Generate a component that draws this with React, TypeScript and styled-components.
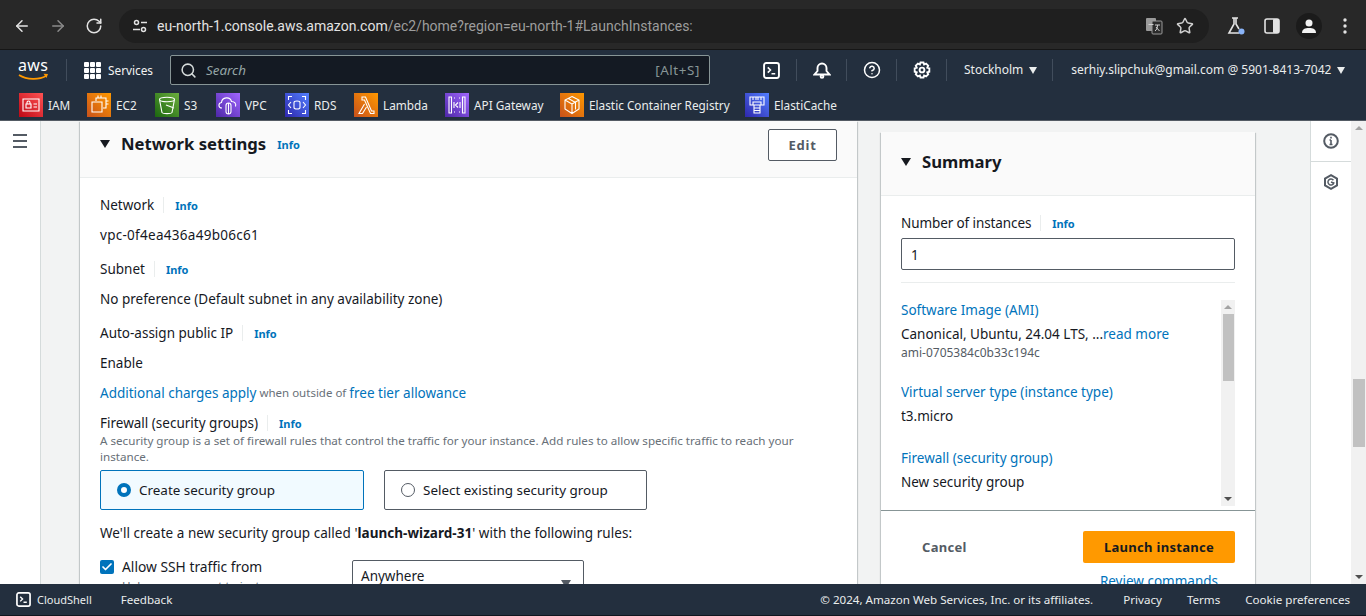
import React from "react";
import styled, { createGlobalStyle } from "styled-components";
import { ArrowLeft, ArrowRight, RotateCw, Star, CircleHelp, Search, Check } from "lucide-react";

const GlobalStyle = createGlobalStyle`
	html, body {
		margin: 0;
		padding: 0;
		height: 100%;
		overflow: hidden;
		background: #f2f3f3;
	}
	* {
		box-sizing: border-box;
	}
	body {
		font-family: "Noto Sans", "Open Sans", sans-serif;
		font-size: 14px;
		line-height: 20px;
		color: #16191f;
	}
`;

const Page = styled.div`
	width: 1366px;
	height: 616px;
	display: flex;
	flex-direction: column;
	overflow: hidden;
`;

/* browser chrome */
const BrowserBar = styled.div`
	height: 50px;
	flex: none;
	background: #282828;
	border-bottom: 1px solid #161616;
	display: flex;
	align-items: center;
	padding: 2px 0 0 13px;
	color: #e3e3e3;
`;
const NavBtn = styled.span<{ $dim?: boolean }>`
	width: 18px;
	height: 18px;
	margin-right: 18px;
	display: flex;
	color: ${(p) => (p.$dim ? "#8a8a8a" : "#e3e3e3")};
`;
const AddressPill = styled.div`
	margin-left: -2px;
	width: 1090px;
	height: 34px;
	border-radius: 17px;
	background: #1f1f1f;
	display: flex;
	align-items: center;
	padding-left: 9px;
`;
const TuneBadge = styled.span`
	width: 24px;
	height: 24px;
	display: flex;
	align-items: center;
	justify-content: center;
	margin-right: 4px;
`;
const Url = styled.div`
	font-family: Roboto, "Noto Sans", sans-serif;
	font-size: 14px;
	color: #9d9d9d;
	flex: 1;
	white-space: nowrap;
	padding-left: 1px;
`;
const UrlHost = styled.span`
	color: #e3e3e3;
`;
const PillIcons = styled.div`
	display: flex;
	align-items: center;
	gap: 13px;
	padding-right: 15px;
`;
const ChromeIcons = styled.div`
	display: flex;
	align-items: center;
	margin-left: 17px;
`;
const Avatar = styled.span`
	width: 26px;
	height: 26px;
	border-radius: 50%;
	background: #1b1b1b;
	display: flex;
	align-items: center;
	justify-content: center;
	margin: 0 21px 0 16px;
`;

/* console header */
const ConsoleHeader = styled.header`
	flex: none;
	height: 71px;
	background: #232f3e;
	color: #fff;
	border-bottom: 1px solid #545b64;
`;
const TopRow = styled.div`
	height: 38px;
	display: flex;
	align-items: center;
	padding: 2px 0 0 18px;
	font-size: 12px;
`;
const VLine = styled.span<{ $h?: number }>`
	width: 1px;
	height: ${(p) => p.$h ?? 22}px;
	background: #414d5c;
	flex: none;
`;
const Services = styled.div`
	display: flex;
	align-items: center;
	gap: 7px;
	margin-left: 17px;
	width: 86px;
	font-size: 11.8px;
	color: #f2f3f3;
	flex: none;
`;
const GridDots = styled.span`
	display: grid;
	grid-template-columns: repeat(3, 5px);
	grid-auto-rows: 5px;
	gap: 1px;
	& > i {
		background: #fff;
		border-radius: 1px;
	}
`;
const SearchBox = styled.div`
	width: 540px;
	height: 30px;
	flex: none;
	background: #141a23;
	border: 1px solid #879596;
	border-radius: 2px;
	display: flex;
	align-items: center;
	padding: 0 9px;
	color: #d5dbdb;
`;
const SearchHint = styled.span`
	font-style: italic;
	font-size: 13.4px;
	color: #95a5a6;
	margin-left: 9px;
	flex: 1;
`;
const ShortKey = styled.span`
	font-size: 13.4px;
	letter-spacing: 0.6px;
	color: #879596;
`;
const HeadIcon = styled.span`
	width: 49px;
	display: flex;
	justify-content: center;
	flex: none;
`;
const Region = styled.span`
	display: flex;
	align-items: center;
	gap: 6px;
	font-size: 12px;
	color: #eaeded;
`;
const Caret = styled.span<{ $size?: number; $color?: string }>`
	width: 0;
	height: 0;
	flex: none;
	border-left: ${(p) => p.$size ?? 5}px solid transparent;
	border-right: ${(p) => p.$size ?? 5}px solid transparent;
	border-top: ${(p) => (p.$size ?? 5) + 3}px solid ${(p) => p.$color ?? "#eaeded"};
`;
const Favorites = styled.div`
	height: 32px;
	display: flex;
	align-items: center;
	gap: 17px;
	padding: 2px 0 0 19px;
	font-size: 11.8px;
	color: #eaeded;
`;
const FavItem = styled.span`
	display: flex;
	align-items: center;
	gap: 5px;
	white-space: nowrap;
`;
const FavLabel = styled.span<{ $w: number }>`
	width: ${(p) => p.$w}px;
`;
const Tile = styled.span<{ $from: string; $to: string }>`
	width: 24px;
	height: 24px;
	display: flex;
	background: linear-gradient(45deg, ${(p) => p.$from}, ${(p) => p.$to});
`;

/* page body */
const Main = styled.main`
	flex: 1;
	min-height: 0;
	display: flex;
	overflow: hidden;
`;
const NavRail = styled.div`
	width: 41px;
	flex: none;
	background: #fff;
	border-right: 1px solid #d5dbdb;
	padding: 13px 0 0 13px;
	display: flex;
	flex-direction: column;
	gap: 4px;
	& > i {
		width: 14px;
		height: 2px;
		background: #545b64;
	}
`;
const Canvas = styled.div`
	flex: 1;
	display: grid;
	grid-template-columns: 777px 374px;
	gap: 24px;
	padding: 0 55px 0 39px;
	overflow: hidden;
`;
const Card = styled.section`
	background: #fff;
	box-shadow: 0 1px 1px 0 rgba(0, 28, 36, 0.3), 1px 1px 1px 0 rgba(0, 28, 36, 0.15),
		-1px 1px 1px 0 rgba(0, 28, 36, 0.15);
`;
const CardHead = styled.div`
	height: 57px;
	background: #fafafa;
	border-bottom: 1px solid #eaeded;
	padding: 8px 20px 0;
	display: flex;
	align-items: flex-start;
`;
const TitleWrap = styled.div`
	display: flex;
	align-items: center;
	flex: 1;
	height: 30px;
`;
const Title = styled.h2`
	font-size: 16.7px;
	line-height: 30px;
	font-weight: 700;
	margin: 0 11px 0 11px;
`;
const InfoLink = styled.a`
	font-size: 11px;
	font-weight: 700;
	color: #0073bb;
	line-height: 16px;
	padding-top: 2px;
`;
const EditBtn = styled.button`
	width: 69px;
	height: 32px;
	background: #fff;
	border: 1px solid #545b64;
	border-radius: 2px;
	color: #545b64;
	font: 700 13px/20px "Noto Sans", sans-serif;
	letter-spacing: 0.8px;
	padding: 0;
`;
const Form = styled.div`
	padding: 17px 20px 0;
	display: flex;
	flex-direction: column;
`;
const Row = styled.div<{ $top?: number; $track?: number }>`
	display: flex;
	align-items: center;
	height: 20px;
	margin-top: ${(p) => p.$top ?? 0}px;
	font-size: 13.5px;
	letter-spacing: ${(p) => p.$track ?? 0}px;
	white-space: nowrap;
`;
const Divider = styled.span`
	width: 1px;
	height: 16px;
	background: #eaeded;
	margin: 0 11px 0 9px;
`;
const Link = styled.a`
	color: #0073bb;
`;
const Muted = styled.span`
	font-size: 11.5px;
	color: #687078;
	margin: 0 3px;
`;
const Help = styled.p`
	margin: 0;
	font-size: 11.65px;
	line-height: 16px;
	color: #687078;
	width: 720px;
`;
const TileRow = styled.div`
	display: flex;
	gap: 20px;
	margin-top: 5px;
`;
const RadioTile = styled.div<{ $on?: boolean }>`
	height: 40px;
	width: ${(p) => (p.$on ? 264 : 263)}px;
	display: flex;
	align-items: center;
	gap: 8px;
	padding-left: 16px;
	font-size: 13.45px;
	border: 1px solid ${(p) => (p.$on ? "#0073bb" : "#545b64")};
	background: ${(p) => (p.$on ? "#f1faff" : "#fff")};
	border-radius: 2px;
`;
const RadioDot = styled.span<{ $on?: boolean }>`
	width: 14px;
	height: 14px;
	border-radius: 50%;
	flex: none;
	border: ${(p) => (p.$on ? "4px solid #0073bb" : "1px solid #545b64")};
	background: #fff;
`;
const SshRow = styled.div`
	display: grid;
	grid-template-columns: 252px 232px;
	margin-top: 14px;
`;
const CheckField = styled.div`
	display: grid;
	grid-template-columns: 14px auto;
	align-content: start;
	column-gap: 8px;
	font-size: 13.8px;
`;
const CheckBox = styled.span`
	width: 14px;
	height: 14px;
	margin-top: 3px;
	background: #0073bb;
	border-radius: 2px;
	color: #fff;
	display: flex;
	align-items: center;
	justify-content: center;
`;
const CheckHelp = styled.span`
	grid-column: 2;
	margin-top: 1px;
	font-size: 11.65px;
	line-height: 16px;
	color: #687078;
`;
const SelectBox = styled.div`
	height: 48px;
	margin-top: 3px;
	border: 1px solid #545b64;
	border-radius: 2px;
	display: flex;
	align-items: flex-start;
	justify-content: space-between;
	padding: 5px 12px 0 8px;
	font-size: 13.5px;
`;
const SelectCaret = styled(Caret)`
	margin-top: 14px;
`;

/* summary */
const SummaryCol = styled.div`
	padding-top: 11px;
`;
const SummaryHead = styled.div`
	height: 64px;
	background: #fafafa;
	border-bottom: 1px solid #eaeded;
	padding: 0 20px 3px;
	display: flex;
	align-items: center;
`;
const SummaryBody = styled.div`
	padding: 17px 20px 4px;
`;
const CountInput = styled.div`
	height: 32px;
	margin-top: 5px;
	border: 1px solid #545b64;
	border-radius: 2px;
	display: flex;
	align-items: center;
	padding: 1px 0 0 9px;
	font-size: 13.5px;
`;
const HLine = styled.div`
	height: 1px;
	background: #eaeded;
	margin: 12px 0 17px;
`;
const ScrollArea = styled.div`
	height: 206px;
	display: flex;
	justify-content: space-between;
	overflow: hidden;
`;
const Specs = styled.div`
	display: flex;
	flex-direction: column;
`;
const MiniBar = styled.div`
	width: 14px;
	flex: none;
	background: #f1f1f1;
	display: flex;
	flex-direction: column;
	align-items: center;
`;
const Arrow = styled.span<{ $up?: boolean }>`
	flex: none;
	width: 0;
	height: 0;
	margin: 5px 0;
	border-left: 4px solid transparent;
	border-right: 4px solid transparent;
	${(p) => (p.$up ? "border-bottom: 4px solid #a3a3a3;" : "border-top: 4px solid #505050;")}
`;
const Thumb = styled.span<{ $h: number }>`
	width: calc(100% - 3px);
	height: ${(p) => p.$h}px;
	background: #c1c1c1;
	flex: none;
`;
const Fill = styled.span`
	flex: 1;
`;
const Small = styled.div`
	font-size: 12px;
	line-height: 16px;
	padding-top: 1px;
	color: #545b64;
`;
const Actions = styled.div`
	border-top: 1px solid #879596;
	padding: 20px 20px 30px;
	display: flex;
	flex-direction: column;
	align-items: flex-end;
	gap: 8px;
`;
const ActionRow = styled.div`
	display: flex;
	align-items: center;
	justify-content: space-between;
	width: 100%;
`;
const CancelBtn = styled.button`
	border: 0;
	background: none;
	color: #545b64;
	font: 700 13px/20px "Noto Sans", sans-serif;
	letter-spacing: 0.3px;
	padding: 0 0 0 21px;
`;
const LaunchBtn = styled.button`
	width: 152px;
	height: 32px;
	border: 0;
	background: #ff9900;
	border-radius: 2px;
	color: #16191f;
	font: 700 13px/20px "Noto Sans", sans-serif;
	letter-spacing: 0.3px;
	padding: 0;
`;
const ReviewLink = styled.a`
	color: #0073bb;
	font-size: 13.5px;
	padding-right: 17px;
`;

/* right side */
const ToolsRail = styled.aside`
	width: 41px;
	flex: none;
	background: #fff;
	border-left: 1px solid #d5dbdb;
	color: #545b64;
`;
const ToolBtn = styled.div<{ $line?: boolean }>`
	height: 41px;
	display: flex;
	align-items: center;
	justify-content: center;
	padding-bottom: ${(p) => (p.$line ? 0 : 1)}px;
	${(p) => p.$line && "border-bottom: 1px solid #d5dbdb;"}
`;
const PageScroll = styled.div`
	width: 15px;
	flex: none;
	background: #f1f1f1;
	display: flex;
	flex-direction: column;
	align-items: center;
`;
const PageThumbSpace = styled.span`
	height: 244px;
	flex: none;
`;

/* footer */
const Footer = styled.footer`
	flex: none;
	height: 32px;
	background: #232f3e;
	border-bottom: 1px solid #10161f;
	color: #eaeded;
	font-size: 11.6px;
	display: flex;
	align-items: center;
	padding: 0 16px;
`;
const FootLeft = styled.span`
	display: flex;
	align-items: center;
	gap: 6px;
	margin-right: 29px;
	font-size: 11px;
`;
const FootRight = styled.div`
	margin-left: auto;
	display: flex;
	gap: 25px;
`;
const Copy = styled.span`
	margin-right: 5px;
`;

const ConsoleIcon = ({ size = 17 }: { size?: number }) => (
	<svg width={size} height={size} viewBox="0 0 16 16" fill="none" stroke="#fff">
		<rect x="1" y="1" width="14" height="14" rx="2" strokeWidth="1.8" />
		<path d="M4.500 5l2.500 2.500L4.500 10M8 11h3.500" strokeWidth="1.5" />
	</svg>
);

const TILES = [
	{
		name: "IAM",
		w: 22,
		from: "#bd0816",
		to: "#ff5252",
		d: "M4 6h16v12H4zM8 11v-1.500a1.500 1.500 0 0 1 3 0V11M7 11h5v4H7zM14.500 11H18M14.500 14H18",
	},
	{
		name: "EC2",
		w: 22,
		from: "#c8511b",
		to: "#ff9900",
		d: "M9 8V5h10v10h-3M5 9h10v10H5zM11 2.500v2M14 2.500v2M19 8h2.500M19 11h2.500",
	},
	{
		name: "S3",
		w: 15,
		from: "#1b660f",
		to: "#6cae3e",
		d: "M4.500 6.500c0-3 15-3 15 0s-15 3-15 0zM4.500 6.500L7 19.500c1 1.500 9 1.500 10 0l2.500-13M11 12l8 3",
	},
	{
		name: "VPC",
		w: 23,
		from: "#4d27a8",
		to: "#a166ff",
		d: "M6 15c-4 0-4-5-.5-5.500C6 4 14 3 15.500 8.500c3 0 5 2 4 5M10 12.500a2.500 2.500 0 0 1 5 0v6a2.500 2.500 0 0 1-5 0zM12.500 10v11",
	},
	{
		name: "RDS",
		w: 23,
		from: "#2e27ad",
		to: "#527fff",
		d: "M9 9.500c0-2 6-2 6 0v5c0 2-6 2-6 0zM3.500 7V3.500H7M20.500 7V3.500H17M3.500 17v3.500H7M20.500 17v3.500H17M6 9l-2.500 3L6 15M18 9l2.500 3L18 15",
	},
	{
		name: "Lambda",
		w: 45,
		from: "#c8511b",
		to: "#ff9900",
		d: "M8 4h3.500l6 14H20v2.500h-3.500L10.500 7H8zM10.500 11L5 20.500h3.500L12.500 14",
	},
	{
		name: "API Gateway",
		w: 69,
		from: "#4d27a8",
		to: "#a166ff",
		d: "M4 4h2.500v16H4zM17.500 4H20v16h-2.500zM9 5h1M9 19h1M14 5h1M14 19h1M9 9v6M15 9v6M13 9.500L10.500 12l2.500 2.500",
	},
	{
		name: "Elastic Container Registry",
		w: 139,
		from: "#c8511b",
		to: "#ff9900",
		d: "M12 3.500l7 3.500v9l-7 4.500-7-4.500V7zM5 7l7 4v9.500M12 11l7-4M8.500 5.500l7 4v7",
	},
	{
		name: "ElastiCache",
		w: 62,
		from: "#2e27ad",
		to: "#527fff",
		d: "M5 4h14v8h-3v-3H8v3H5zM8 4v3M11 4v3M13 4v3M16 4v3M9 12h6v8H9zM9 15h6M9 17.500h6",
	},
];

const App = () => {
	return (
		<Page>
			<GlobalStyle />
			<BrowserBar>
				<NavBtn>
					<ArrowLeft size={18} strokeWidth={2} />
				</NavBtn>
				<NavBtn $dim>
					<ArrowRight size={18} strokeWidth={2} />
				</NavBtn>
				<NavBtn>
					<RotateCw size={18} strokeWidth={2} />
				</NavBtn>
				<AddressPill>
					<TuneBadge>
						<svg width="16" height="16" viewBox="0 0 16 16" fill="none" stroke="#e3e3e3" strokeWidth="1.5">
							<circle cx="4.500" cy="4.500" r="2" />
							<path d="M9 4.500h6M1 11.500h7" />
							<circle cx="11.500" cy="11.500" r="2" />
						</svg>
					</TuneBadge>
					<Url>
						<UrlHost>eu-north-1.console.aws.amazon.com</UrlHost>/ec2/home?region=eu-north-1#LaunchInstances:
					</Url>
					<PillIcons>
						<svg width="18" height="18" viewBox="0 0 18 18">
							<rect x="1" y="1" width="10" height="13" rx="1" fill="#9a9a9a" />
							<rect x="7" y="4" width="10" height="13" rx="1" fill="#2b2b2b" stroke="#9a9a9a" />
							<path d="M3.500 7.500h5M10 8h5M12.500 8c0 3-1 5-2.500 6M11 10l3.500 4" stroke="#cfcfcf" strokeWidth="1" fill="none" />
						</svg>
						<Star size={18} strokeWidth={2} color="#d0d0d0" />
					</PillIcons>
				</AddressPill>
				<ChromeIcons>
					<svg width="20" height="20" viewBox="0 0 20 20" fill="none" stroke="#e3e3e3" strokeWidth="1.6">
						<path d="M6 2h6M8 2v6L3 17h10" />
						<path d="M10 2v6l3 5" />
						<circle cx="15.500" cy="15.500" r="3" fill="#8ab4f8" stroke="none" />
					</svg>
					<svg width="16" height="16" viewBox="0 0 16 16" style={{ marginLeft: 18 }}>
						<rect x="1" y="1" width="14" height="14" rx="2" fill="none" stroke="#e3e3e3" strokeWidth="1.6" />
						<rect x="9" y="1" width="6" height="14" rx="1" fill="#e3e3e3" />
					</svg>
					<Avatar>
						<svg width="16" height="16" viewBox="0 0 16 16" fill="#f2f2f2">
							<circle cx="8" cy="5" r="3.500" />
							<path d="M1 15c0-4 3-5 7-5s7 1 7 5z" />
						</svg>
					</Avatar>
					<svg width="4" height="16" viewBox="0 0 4 16" fill="#e3e3e3">
						<circle cx="2" cy="2" r="1.700" />
						<circle cx="2" cy="8" r="1.700" />
						<circle cx="2" cy="14" r="1.700" />
					</svg>
				</ChromeIcons>
			</BrowserBar>

			<ConsoleHeader>
				<TopRow>
					<svg width="32" height="24" viewBox="0 0 32 24" style={{ flex: "none", marginRight: 16, overflow: "visible" }}>
						<text x="0" y="13" fontFamily="'Noto Sans', sans-serif" fontSize="16" fill="#fff" textLength="30">
							aws
						</text>
						<path d="M1 17c8 5 20 5 27 1" fill="none" stroke="#f90" strokeWidth="1.700" />
						<path d="M25.500 15.800l4.500.2-1.500 4z" fill="#f90" />
					</svg>
					<VLine />
					<Services>
						<GridDots>
							{Array.from({ length: 9 }, (_, i) => (
								<i key={i} />
							))}
						</GridDots>
						Services
					</Services>
					<SearchBox>
						<Search size={17} strokeWidth={2.2} />
						<SearchHint>Search</SearchHint>
						<ShortKey>[Alt+S]</ShortKey>
					</SearchBox>
					<HeadIcon style={{ marginLeft: 37 }}>
						<ConsoleIcon />
					</HeadIcon>
					<VLine />
					<HeadIcon>
						<svg width="18" height="18" viewBox="0 0 18 18" fill="none" stroke="#fff" strokeWidth="1.900">
							<path d="M1.500 13.500h15L13.500 10V7a4.500 4.500 0 0 0-9 0v3z" />
							<circle cx="9" cy="15.500" r="1.400" />
						</svg>
					</HeadIcon>
					<VLine />
					<HeadIcon>
						<CircleHelp size={18} strokeWidth={2} />
					</HeadIcon>
					<VLine />
					<HeadIcon>
						<svg width="18" height="18" viewBox="0 0 18 18" fill="none" stroke="#fff" strokeWidth="1.900">
							<path d="M7.500 1.500h3l.6 2 2-.9 2.100 2.100-.9 2 2 .6v3.400l-2 .6.9 2-2.100 2.100-2-.9-.6 2h-3l-.6-2-2 .9-2.100-2.100.9-2-2-.6V7.300l2-.6-.9-2 2.100-2.100 2 .9z" />
							<circle cx="9" cy="9" r="2.400" />
						</svg>
					</HeadIcon>
					<VLine />
					<Region style={{ margin: "0 15px 0 17px" }}>
						Stockholm <Caret $size={4.5} />
					</Region>
					<VLine />
					<Region style={{ marginLeft: 18 }}>
						serhiy.slipchuk@gmail.com @ 5901-8413-7042 <Caret $size={4.5} />
					</Region>
				</TopRow>
				<Favorites>
					{TILES.map((t) => (
						<FavItem key={t.name}>
							<Tile $from={t.from} $to={t.to}>
								<svg width="24" height="24" viewBox="0 0 24 24" fill="none" stroke="#fff" strokeWidth="1.100">
									<path d={t.d} />
								</svg>
							</Tile>
							<FavLabel $w={t.w}>{t.name}</FavLabel>
						</FavItem>
					))}
				</Favorites>
			</ConsoleHeader>

			<Main>
				<NavRail>
					<i />
					<i />
					<i />
				</NavRail>
				<Canvas>
					<div>
						<Card>
							<CardHead>
								<TitleWrap>
									<Caret $color="#16191f" />
									<Title>Network settings</Title>
									<InfoLink>Info</InfoLink>
								</TitleWrap>
								<EditBtn>Edit</EditBtn>
							</CardHead>
							<Form>
								<Row>
									Network
									<Divider />
									<InfoLink>Info</InfoLink>
								</Row>
								<Row $top={10} $track={0.28}>
									vpc-0f4ea436a49b06c61
								</Row>
								<Row $top={14}>
									Subnet
									<Divider />
									<InfoLink>Info</InfoLink>
								</Row>
								<Row $top={10}>No preference (Default subnet in any availability zone)</Row>
								<Row $top={14}>
									Auto-assign public IP
									<Divider />
									<InfoLink>Info</InfoLink>
								</Row>
								<Row $top={10}>Enable</Row>
								<Row $top={10}>
									<Link>Additional charges apply</Link>
									<Muted>when outside of</Muted>
									<Link>free tier allowance</Link>
								</Row>
								<Row $top={10}>
									Firewall (security groups)
									<Divider />
									<InfoLink>Info</InfoLink>
								</Row>
								<Help>
									A security group is a set of firewall rules that control the traffic for your instance. Add rules to allow
									specific traffic to reach your instance.
								</Help>
								<TileRow>
									<RadioTile $on>
										<RadioDot $on />
										Create security group
									</RadioTile>
									<RadioTile>
										<RadioDot />
										Select existing security group
									</RadioTile>
								</TileRow>
								<Row $top={13} $track={0.04}>
									<span>
										We'll create a new security group called '<b>launch-wizard-31</b>' with the following rules:
									</span>
								</Row>
								<SshRow>
									<CheckField>
										<CheckBox>
											<Check size={12} strokeWidth={3.5} />
										</CheckBox>
										Allow SSH traffic from
										<CheckHelp>Helps you connect to instance</CheckHelp>
									</CheckField>
									<SelectBox>
										Anywhere
										<SelectCaret $color="#545b64" />
									</SelectBox>
								</SshRow>
							</Form>
						</Card>
					</div>
					<SummaryCol>
						<Card>
							<SummaryHead>
								<Caret $color="#16191f" />
								<Title>Summary</Title>
							</SummaryHead>
							<SummaryBody>
								<Row $track={-0.1}>
									Number of instances
									<Divider />
									<InfoLink>Info</InfoLink>
								</Row>
								<CountInput>1</CountInput>
								<HLine />
								<ScrollArea>
									<Specs>
										<Row>
											<Link>Software Image (AMI)</Link>
										</Row>
										<Row $top={4}>
											<span>
												Canonical, Ubuntu, 24.04 LTS, ...<Link>read more</Link>
											</span>
										</Row>
										<Small>ami-0705384c0b33c194c</Small>
										<Row $top={21}>
											<Link>Virtual server type (instance type)</Link>
										</Row>
										<Row $top={4}>t3.micro</Row>
										<Row $top={22}>
											<Link>Firewall (security group)</Link>
										</Row>
										<Row $top={4}>New security group</Row>
									</Specs>
									<MiniBar>
										<Arrow $up />
										<Thumb $h={67} />
										<Fill />
										<Arrow />
									</MiniBar>
								</ScrollArea>
							</SummaryBody>
							<Actions>
								<ActionRow>
									<CancelBtn>Cancel</CancelBtn>
									<LaunchBtn>Launch instance</LaunchBtn>
								</ActionRow>
								<ReviewLink>Review commands</ReviewLink>
							</Actions>
						</Card>
					</SummaryCol>
				</Canvas>
				<ToolsRail>
					<ToolBtn $line>
						<svg width="16" height="16" viewBox="0 0 16 16" fill="none" stroke="currentColor" strokeWidth="2">
							<circle cx="8" cy="8" r="6.800" />
							<path d="M8 7v4.500M6.500 11.500h3M6.500 7H8M8 3.800v1.600" strokeWidth="1.600" />
						</svg>
					</ToolBtn>
					<ToolBtn>
						<svg width="16" height="16" viewBox="0 0 16 16" fill="none" stroke="currentColor" strokeWidth="2">
							<path d="M8 1.200l6 3.400v6.800l-6 3.400-6-3.400V4.600z" />
							<path d="M10.400 6.300A3 3 0 1 0 10.800 9L8 8" strokeWidth="1.500" />
						</svg>
					</ToolBtn>
				</ToolsRail>
				<PageScroll>
					<Arrow $up />
					<PageThumbSpace />
					<Thumb $h={68} />
					<Fill />
					<Arrow />
				</PageScroll>
			</Main>

			<Footer>
				<FootLeft>
					<ConsoleIcon size={15} />
					CloudShell
				</FootLeft>
				<span>Feedback</span>
				<FootRight>
					<Copy>© 2024, Amazon Web Services, Inc. or its affiliates.</Copy>
					<span>Privacy</span>
					<span>Terms</span>
					<span>Cookie preferences</span>
				</FootRight>
			</Footer>
		</Page>
	);
};

export default App;
